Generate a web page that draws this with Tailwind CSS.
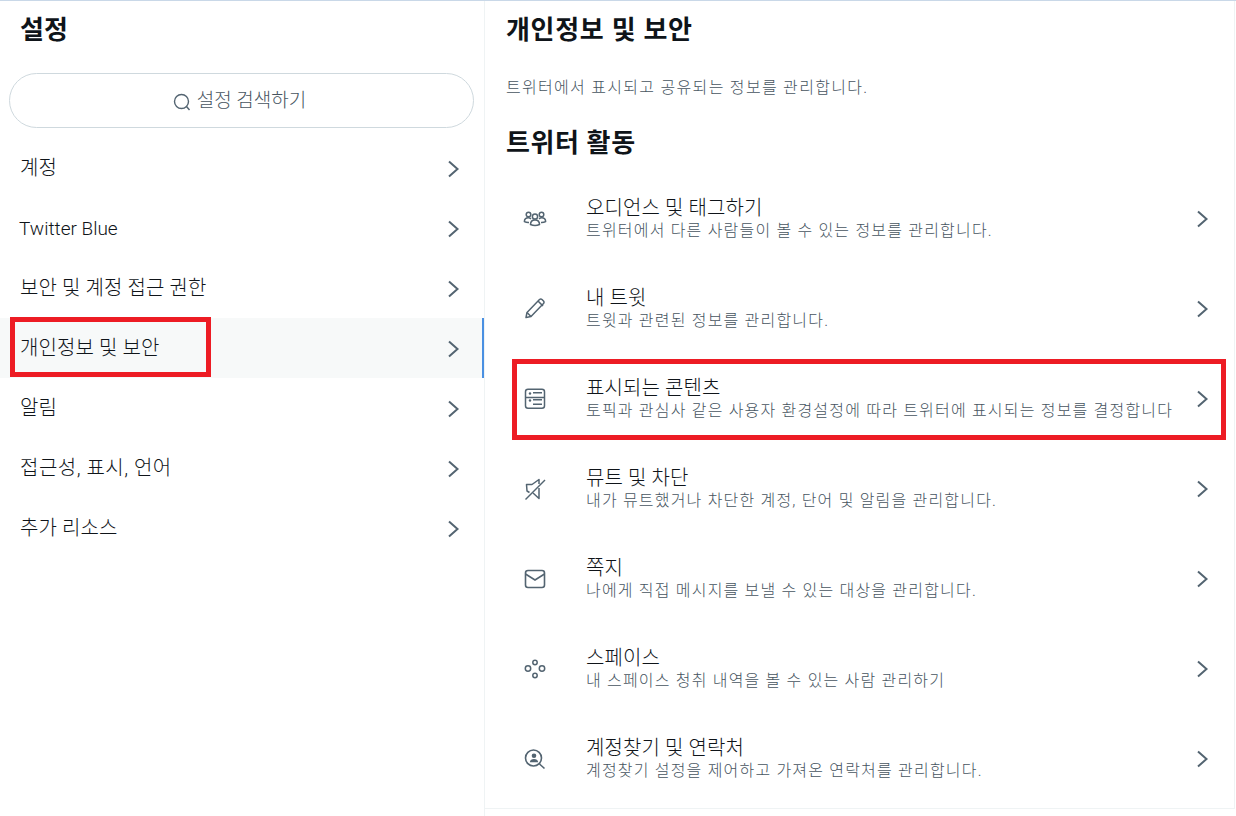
<!DOCTYPE html>
<html lang="ko">
<head>
<meta charset="UTF-8">
<title>설정</title>
<script src="https://cdn.jsdelivr.net/npm/@tailwindcss/browser@4"></script>
</head>
<body class="bg-white overflow-hidden font-['Roboto','Noto_Sans_CJK_KR',sans-serif] text-[#0f1419]">
<div class="relative w-[1236px] h-[816px] border-t border-[#c9d8e8] flex">

  <!-- settings menu -->
  <div class="w-[485px] h-full border-r border-[#eff3f4] shrink-0">
    <h2 class="h-[57px] pl-[20px] pt-[10px] text-[26px] leading-[38px] font-bold">설정</h2>
    <div class="mx-[9px] mt-[15px] w-[465px] h-[55px] rounded-full border border-[#cfd9de] flex items-center justify-center gap-[6px] text-[#47555f] text-[19px] font-light">
      <svg class="w-[18px] h-[18px] mt-[2px]" viewBox="0 0 18 18" fill="none" stroke="#536471" stroke-width="1.4"><circle cx="8.5" cy="8.5" r="7"/><path d="M13.5 13.5l3 3.5"/></svg>
      <span class="mt-[1px] mr-[4px]">설정 검색하기</span>
    </div>
    <nav class="mt-[10px] font-light">
      <a class="h-[60px] flex items-center justify-between pl-[20px] pr-[22px] text-[20px] tracking-[0.1px]"><span>계정</span><svg class="w-[16px] h-[20px] mt-[1px]" viewBox="0 0 16 20" fill="none" stroke="#536471" stroke-width="2"><path d="M3 2.500l8.500 7.500-8.500 7.500"/></svg></a>
      <a class="h-[60px] flex items-center justify-between pl-[19px] pr-[22px] text-[19px]"><span class="mt-[2px]">Twitter Blue</span><svg class="w-[16px] h-[20px] mt-[1px]" viewBox="0 0 16 20" fill="none" stroke="#536471" stroke-width="2"><path d="M3 2.500l8.500 7.500-8.500 7.500"/></svg></a>
      <a class="h-[60px] flex items-center justify-between pl-[20px] pr-[22px] text-[20px] tracking-[0.1px]"><span>보안 및 계정 접근 권한</span><svg class="w-[16px] h-[20px] mt-[1px]" viewBox="0 0 16 20" fill="none" stroke="#536471" stroke-width="2"><path d="M3 2.500l8.500 7.500-8.500 7.500"/></svg></a>
      <a class="h-[60px] flex items-center justify-between pl-[20px] pr-[22px] text-[20px] tracking-[0.1px] bg-[#f7f9f9] border-r-2 border-[#4a90e2]"><span>개인정보 및 보안</span><svg class="w-[16px] h-[20px] mt-[1px] -mr-[2px]" viewBox="0 0 16 20" fill="none" stroke="#536471" stroke-width="2"><path d="M3 2.500l8.500 7.500-8.500 7.500"/></svg></a>
      <a class="h-[60px] flex items-center justify-between pl-[20px] pr-[22px] text-[20px] tracking-[0.1px]"><span>알림</span><svg class="w-[16px] h-[20px] mt-[1px]" viewBox="0 0 16 20" fill="none" stroke="#536471" stroke-width="2"><path d="M3 2.500l8.500 7.500-8.500 7.500"/></svg></a>
      <a class="h-[60px] flex items-center justify-between pl-[20px] pr-[22px] text-[20px] tracking-[0.5px]"><span>접근성, 표시, 언어</span><svg class="w-[16px] h-[20px] mt-[1px]" viewBox="0 0 16 20" fill="none" stroke="#536471" stroke-width="2"><path d="M3 2.500l8.500 7.500-8.500 7.500"/></svg></a>
      <a class="h-[60px] flex items-center justify-between pl-[20px] pr-[22px] text-[20px] tracking-[0.1px]"><span>추가 리소스</span><svg class="w-[16px] h-[20px] mt-[1px]" viewBox="0 0 16 20" fill="none" stroke="#536471" stroke-width="2"><path d="M3 2.500l8.500 7.500-8.500 7.500"/></svg></a>
    </nav>
  </div>

  <!-- privacy detail -->
  <div class="w-[750px] h-[808px] border-r border-b border-[#eff3f4] shrink-0">
    <h2 class="h-[57px] pl-[21px] pt-[10px] text-[26px] leading-[38px] font-bold tracking-[0.7px]">개인정보 및 보안</h2>
    <p class="pl-[21px] pt-[19px] h-[57px] text-[16px] leading-[22px] tracking-[1.3px] text-[#47555f] font-light">트위터에서 표시되고 공유되는 정보를 관리합니다.</p>
    <h3 class="pl-[21px] h-[59px] text-[26px] leading-[56px] font-bold tracking-[0.6px]">트위터 활동</h3>

    <a class="h-[90px] flex items-center">
      <div class="w-[101px] pl-[38px] shrink-0">
        <svg class="w-[24px] h-[24px]" viewBox="0 -1 24 24" fill="none" stroke="#536471" stroke-width="1.5"><circle cx="12" cy="8.500" r="2.600"/><circle cx="5.500" cy="6.500" r="2.300"/><circle cx="18.500" cy="6.500" r="2.300"/><path d="M7.500 16.500c0-3 2-4.600 4.500-4.600s4.500 1.600 4.500 4.600c-2.500 1.200-6.500 1.200-9 0z"/><path d="M8 10.800c-1-.8-1.700-1-2.600-1-2.400 0-4 1.500-4 3.800 1.300.7 2.800 1 4.600 .9"/><path d="M16 10.800c1-.8 1.700-1 2.600-1 2.400 0 4 1.500 4 3.800-1.300.7-2.800 1-4.600 .9"/></svg>
      </div>
      <div class="flex-1 min-w-0 font-light"><div class="text-[20px] leading-[22px] mb-[2px] tracking-[0.1px]">오디언스 및 태그하기</div><div class="text-[16px] leading-[20px] tracking-[1.2px] text-[#47555f]">트위터에서 다른 사람들이 볼 수 있는 정보를 관리합니다.</div></div>
      <svg class="w-[16px] h-[20px] mr-[23px]" viewBox="0 0 16 20" fill="none" stroke="#536471" stroke-width="2"><path d="M3 2.500l8.500 7.500-8.500 7.500"/></svg>
    </a>

    <a class="h-[90px] flex items-center">
      <div class="w-[101px] pl-[38px] shrink-0">
        <svg class="w-[24px] h-[24px]" viewBox="0 0 24 24" fill="none" stroke="#536471" stroke-width="1.5" stroke-linejoin="round"><path d="M4 15.500L16.500 2.500c.8-.7 1.800-.7 2.500 0l1.500 1.500c.7.7.7 1.800 0 2.500L8 19.500l-5 1z"/><path d="M15 4l5 5M4 15.500l4 4"/></svg>
      </div>
      <div class="flex-1 min-w-0 font-light"><div class="text-[20px] leading-[22px] mb-[2px] tracking-[0.1px]">내 트윗</div><div class="text-[16px] leading-[20px] tracking-[1.2px] text-[#47555f]">트윗과 관련된 정보를 관리합니다.</div></div>
      <svg class="w-[16px] h-[20px] mr-[23px]" viewBox="0 0 16 20" fill="none" stroke="#536471" stroke-width="2"><path d="M3 2.500l8.500 7.500-8.500 7.500"/></svg>
    </a>

    <a class="h-[90px] flex items-center">
      <div class="w-[101px] pl-[38px] shrink-0">
        <svg class="w-[24px] h-[24px] -mt-[1px]" viewBox="0 0 24 24" fill="none" stroke="#536471" stroke-width="1.5"><rect x="2.500" y="2.300" width="19" height="19" rx="2.500"/><path d="M2.500 10.500h19M10 5.800h9M10 12.800h9M10 17.200h9"/><circle cx="7" cy="6.500" r="1.200" fill="#536471" stroke="none"/><circle cx="7" cy="13.500" r="1.200" fill="#536471" stroke="none"/></svg>
      </div>
      <div class="flex-1 min-w-0 font-light"><div class="text-[20px] leading-[22px] mb-[2px] tracking-[0.1px]">표시되는 콘텐츠</div><div class="text-[16px] leading-[20px] tracking-[1.2px] text-[#47555f]">토픽과 관심사 같은 사용자 환경설정에 따라 트위터에 표시되는 정보를 결정합니다</div></div>
      <svg class="w-[16px] h-[20px] mr-[23px]" viewBox="0 0 16 20" fill="none" stroke="#536471" stroke-width="2"><path d="M3 2.500l8.500 7.500-8.500 7.500"/></svg>
    </a>

    <a class="h-[90px] flex items-center">
      <div class="w-[101px] pl-[38px] shrink-0">
        <svg class="w-[24px] h-[24px] -mt-[1px]" viewBox="0 0 24 24" fill="none" stroke="#536471" stroke-width="1.5" stroke-linejoin="round"><path d="M16 7V2.500L9 7.500H3.500l.5 6.500 2.500 1.500M10 16l6 5.500V11"/><path d="M2.500 22.500L22 3"/></svg>
      </div>
      <div class="flex-1 min-w-0 font-light"><div class="text-[20px] leading-[22px] mb-[2px] tracking-[0.1px]">뮤트 및 차단</div><div class="text-[16px] leading-[20px] tracking-[1.2px] text-[#47555f]">내가 뮤트했거나 차단한 계정, 단어 및 알림을 관리합니다.</div></div>
      <svg class="w-[16px] h-[20px] mr-[23px]" viewBox="0 0 16 20" fill="none" stroke="#536471" stroke-width="2"><path d="M3 2.500l8.500 7.500-8.500 7.500"/></svg>
    </a>

    <a class="h-[90px] flex items-center">
      <div class="w-[101px] pl-[38px] shrink-0">
        <svg class="w-[24px] h-[24px] -mt-[1px]" viewBox="0 0 24 24" fill="none" stroke="#536471" stroke-width="1.6"><rect x="2.500" y="3.500" width="19" height="17" rx="2.500"/><path d="M2.500 7l9.500 6L21.500 7"/></svg>
      </div>
      <div class="flex-1 min-w-0 font-light"><div class="text-[20px] leading-[22px] mb-[2px] tracking-[0.1px]">쪽지</div><div class="text-[16px] leading-[20px] tracking-[1.2px] text-[#47555f]">나에게 직접 메시지를 보낼 수 있는 대상을 관리합니다.</div></div>
      <svg class="w-[16px] h-[20px] mr-[23px]" viewBox="0 0 16 20" fill="none" stroke="#536471" stroke-width="2"><path d="M3 2.500l8.500 7.500-8.500 7.500"/></svg>
    </a>

    <a class="h-[90px] flex items-center">
      <div class="w-[101px] pl-[38px] shrink-0">
        <svg class="w-[24px] h-[24px] -mt-[1px]" viewBox="0 0 24 24" fill="none" stroke="#536471" stroke-width="1.5"><circle cx="12" cy="5.500" r="2.200"/><circle cx="5" cy="11.500" r="2.700"/><circle cx="19" cy="11.500" r="2.700"/><circle cx="12" cy="18.500" r="2.200"/></svg>
      </div>
      <div class="flex-1 min-w-0 font-light"><div class="text-[20px] leading-[22px] mb-[2px] tracking-[0.1px]">스페이스</div><div class="text-[16px] leading-[20px] tracking-[1.2px] text-[#47555f]">내 스페이스 청취 내역을 볼 수 있는 사람 관리하기</div></div>
      <svg class="w-[16px] h-[20px] mr-[23px]" viewBox="0 0 16 20" fill="none" stroke="#536471" stroke-width="2"><path d="M3 2.500l8.500 7.500-8.500 7.500"/></svg>
    </a>

    <a class="h-[90px] flex items-center">
      <div class="w-[101px] pl-[38px] shrink-0">
        <svg class="w-[24px] h-[24px] -mt-[1px]" viewBox="0 0 24 24" fill="none" stroke="#536471" stroke-width="1.6"><circle cx="10.500" cy="11" r="8"/><path d="M16.500 17l5 4.500"/><circle cx="11" cy="8.800" r="2.300" fill="#536471" stroke="none"/><path d="M6.800 15.300c.3-2.200 2-3.300 4.200-3.300s3.900 1.100 4.200 3.300z" fill="#536471" stroke="none"/></svg>
      </div>
      <div class="flex-1 min-w-0 font-light"><div class="text-[20px] leading-[22px] mb-[2px] tracking-[0.1px]">계정찾기 및 연락처</div><div class="text-[16px] leading-[20px] tracking-[1.2px] text-[#47555f]">계정찾기 설정을 제어하고 가져온 연락처를 관리합니다.</div></div>
      <svg class="w-[16px] h-[20px] mr-[23px]" viewBox="0 0 16 20" fill="none" stroke="#536471" stroke-width="2"><path d="M3 2.500l8.500 7.500-8.500 7.500"/></svg>
    </a>
  </div>

  <!-- red annotation boxes -->
  <div class="absolute left-[10px] top-[316px] w-[201px] h-[60px] border-[5px] border-[#ed1c24]"></div>
  <div class="absolute left-[512px] top-[358px] w-[714px] h-[81px] border-[5px] border-[#ed1c24]"></div>
</div>
</body>
</html>
